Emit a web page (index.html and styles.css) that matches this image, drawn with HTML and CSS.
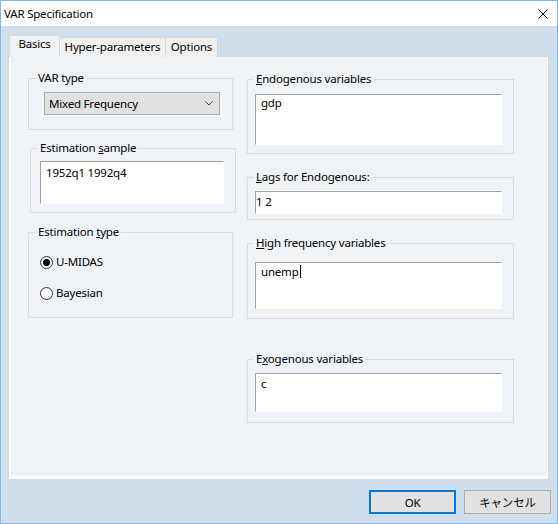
FILE: index.html
```html
<!DOCTYPE html>
<html lang="en">
<head>
    <meta charset="UTF-8">
    <title>VAR Specification</title>
    <link rel="stylesheet" href="styles.css">
</head>
<body>
    <div class="window">
        <div class="titlebar">
            <span class="title">VAR Specification</span>
            <svg class="close" width="10" height="10" viewBox="0 0 10 10">
                <path d="M0.5 0.5L9.5 9.5M9.5 0.5L0.5 9.5" stroke="#000" stroke-width="1" fill="none"/>
            </svg>
        </div>

        <div class="tabs">
            <div class="tab active">Basics</div>
            <div class="tab hyper">Hyper-parameters</div>
            <div class="tab options">Options</div>
        </div>

        <div class="pane">
            <div class="col col-left">
                <fieldset class="group var-type">
                    <legend>VAR type</legend>
                    <div class="select">
                        <span>Mixed Frequency</span>
                        <svg width="8" height="5" viewBox="0 0 8 5">
                            <path d="M0.5 0.5L4 4L7.5 0.5" stroke="#444" stroke-width="1" fill="none"/>
                        </svg>
                    </div>
                </fieldset>

                <fieldset class="group est-sample">
                    <legend>Estimation <u>s</u>ample</legend>
                    <div class="edit sample-edit">1952q1 1992q4</div>
                </fieldset>

                <fieldset class="group est-type">
                    <legend>Estimation <u>t</u>ype</legend>
                    <div class="radio-row">
                        <span class="radio checked"></span>
                        <span>U-MIDAS</span>
                    </div>
                    <div class="radio-row second">
                        <span class="radio"></span>
                        <span>Bayesian</span>
                    </div>
                </fieldset>
            </div>

            <div class="col col-right">
                <fieldset class="group endo">
                    <legend><u>E</u>ndogenous variables</legend>
                    <div class="edit endo-edit">gdp</div>
                </fieldset>

                <fieldset class="group lags">
                    <legend><u>L</u>ags for Endogenous:</legend>
                    <div class="edit lags-edit">1 2</div>
                </fieldset>

                <fieldset class="group high">
                    <legend><u>H</u>igh frequency variables</legend>
                    <div class="edit high-edit">unemp<span class="caret"></span></div>
                </fieldset>

                <fieldset class="group exo">
                    <legend>E<u>x</u>ogenous variables</legend>
                    <div class="edit exo-edit">c</div>
                </fieldset>
            </div>
        </div>

        <div class="buttons">
            <button class="btn default">OK</button>
            <button class="btn">キャンセル</button>
        </div>
    </div>
</body>
</html>
```

FILE: styles.css
```css
body {
    margin: 0;
    font-family: "Noto Sans", "Noto Sans CJK JP", sans-serif;
    font-size: 11.5px;
    letter-spacing: -0.2px;
    line-height: 16px;
    color: #000;
}
.window {
    width: 558px;
    height: 524px;
    box-sizing: border-box;
    border: 1px solid #85b7ea;
    background: #d0dfee;
}
.titlebar {
    height: 25px;
    background: #fff;
    display: flex;
    align-items: center;
    justify-content: space-between;
    padding: 0 9px 0 3px;
}
.close {
    display: block;
    margin-top: 1px;
}

/* tabs */
.tabs {
    display: flex;
    align-items: flex-end;
    margin: 9px 0 -1px 8px;
    height: 22px;
    position: relative;
    z-index: 1;
}
.tab {
    box-sizing: border-box;
    height: 20px;
    padding-top: 1px;
    text-align: center;
    white-space: nowrap;
    background: #f0f0f0;
    border: 1px solid #d9d9d9;
    border-bottom: none;
}
.tab.active {
    width: 50px;
    height: 22px;
    padding-top: 0;
    background: #eff3f8;
    border-right: none;
}
.tab.hyper {
    width: 107px;
}
.tab.options {
    width: 53px;
    margin-left: -1px;
}

/* pane */
.pane {
    box-sizing: border-box;
    width: 542px;
    height: 425px;
    margin-left: 7px;
    padding: 13px 0 0 19px;
    background: #eff3f8;
    border: 1px solid #d9d9d9;
    border-right-width: 2px;
    border-bottom-width: 2px;
    box-shadow: inset 2px 0 #fff, inset 0 -3px #fff, inset -1px 0 #fff;
    display: flex;
    align-items: flex-start;
}
.col-left {
    width: 208px;
}
.col-right {
    width: 267px;
    margin: 1px 0 0 11px;
}

/* group boxes */
.group {
    margin: 0;
    min-width: 0;
    box-sizing: border-box;
    border: 1px solid #dcdcdc;
    padding: 0 0 0 7px;
}
.group legend {
    padding: 0 2px;
    line-height: 16px;
}
.var-type {
    width: 205px;
    padding-top: 6px;
    padding-bottom: 14px;
}
.est-sample {
    width: 206px;
    margin: 10px 0 0 2px;
    padding-top: 5px;
    padding-bottom: 8px;
}
.est-type {
    width: 205px;
    margin-top: 11px;
    padding-top: 14px;
    padding-bottom: 16px;
}
.col-right .group {
    width: 267px;
    padding-left: 6px;
}
.endo {
    padding-top: 7px;
    padding-bottom: 8px;
}
.lags {
    margin-top: 15px;
    padding-top: 6px;
    padding-bottom: 5px;
}
.high {
    margin-top: 15px;
    padding-top: 11px;
    padding-bottom: 9px;
}
.exo {
    margin-top: 32px;
    padding-top: 6px;
    padding-bottom: 10px;
}

/* combo box */
.select {
    box-sizing: border-box;
    width: 176px;
    height: 23px;
    margin-left: 8px;
    padding: 0 6px 0 4px;
    background: #e1e1e1;
    border: 1px solid #adadad;
    display: flex;
    align-items: center;
    justify-content: space-between;
}
.select svg {
    display: block;
}

/* edit boxes */
.edit {
    box-sizing: border-box;
    background: #fff;
    border: 1px solid #fff;
    border-top-color: #a0a0a0;
    border-left-color: #a0a0a0;
    padding-left: 5px;
}
.sample-edit {
    width: 184px;
    height: 43px;
    margin-left: 2px;
    padding-top: 3px;
}
.col-right .edit {
    width: 247px;
    margin-left: 1px;
}
.endo-edit {
    height: 51px;
}
.lags-edit {
    height: 23px;
    padding-top: 2px;
    padding-left: 0;
}
.high-edit {
    height: 47px;
    padding-top: 1px;
}
.exo-edit {
    height: 39px;
    padding-top: 2px;
}
.caret {
    display: inline-block;
    width: 1px;
    height: 13px;
    background: #000;
    vertical-align: -2px;
    margin-left: 1px;
}

/* radio buttons */
.radio-row {
    display: flex;
    align-items: center;
    gap: 3px;
    margin-left: 4px;
    height: 16px;
}
.radio-row.second {
    margin-top: 15px;
}
.radio {
    box-sizing: border-box;
    width: 13px;
    height: 13px;
    border: 1px solid #333;
    border-radius: 50%;
    background: #fff;
    display: flex;
    align-items: center;
    justify-content: center;
}
.radio.checked::after {
    content: "";
    width: 7px;
    height: 7px;
    border-radius: 50%;
    background: #000;
}

/* dialog buttons */
.buttons {
    display: flex;
    justify-content: flex-end;
    gap: 8px;
    margin: 9px 6px 0 0;
}
.btn {
    box-sizing: border-box;
    width: 87px;
    height: 24px;
    padding: 0;
    font-family: "Noto Sans", "Noto Sans CJK JP", sans-serif;
    font-size: 11.5px;
    letter-spacing: -0.2px;
    color: #000;
    background: #e1e1e1;
    border: 1px solid #adadad;
}
.btn.default {
    border: 2px solid #0078d7;
}
```
